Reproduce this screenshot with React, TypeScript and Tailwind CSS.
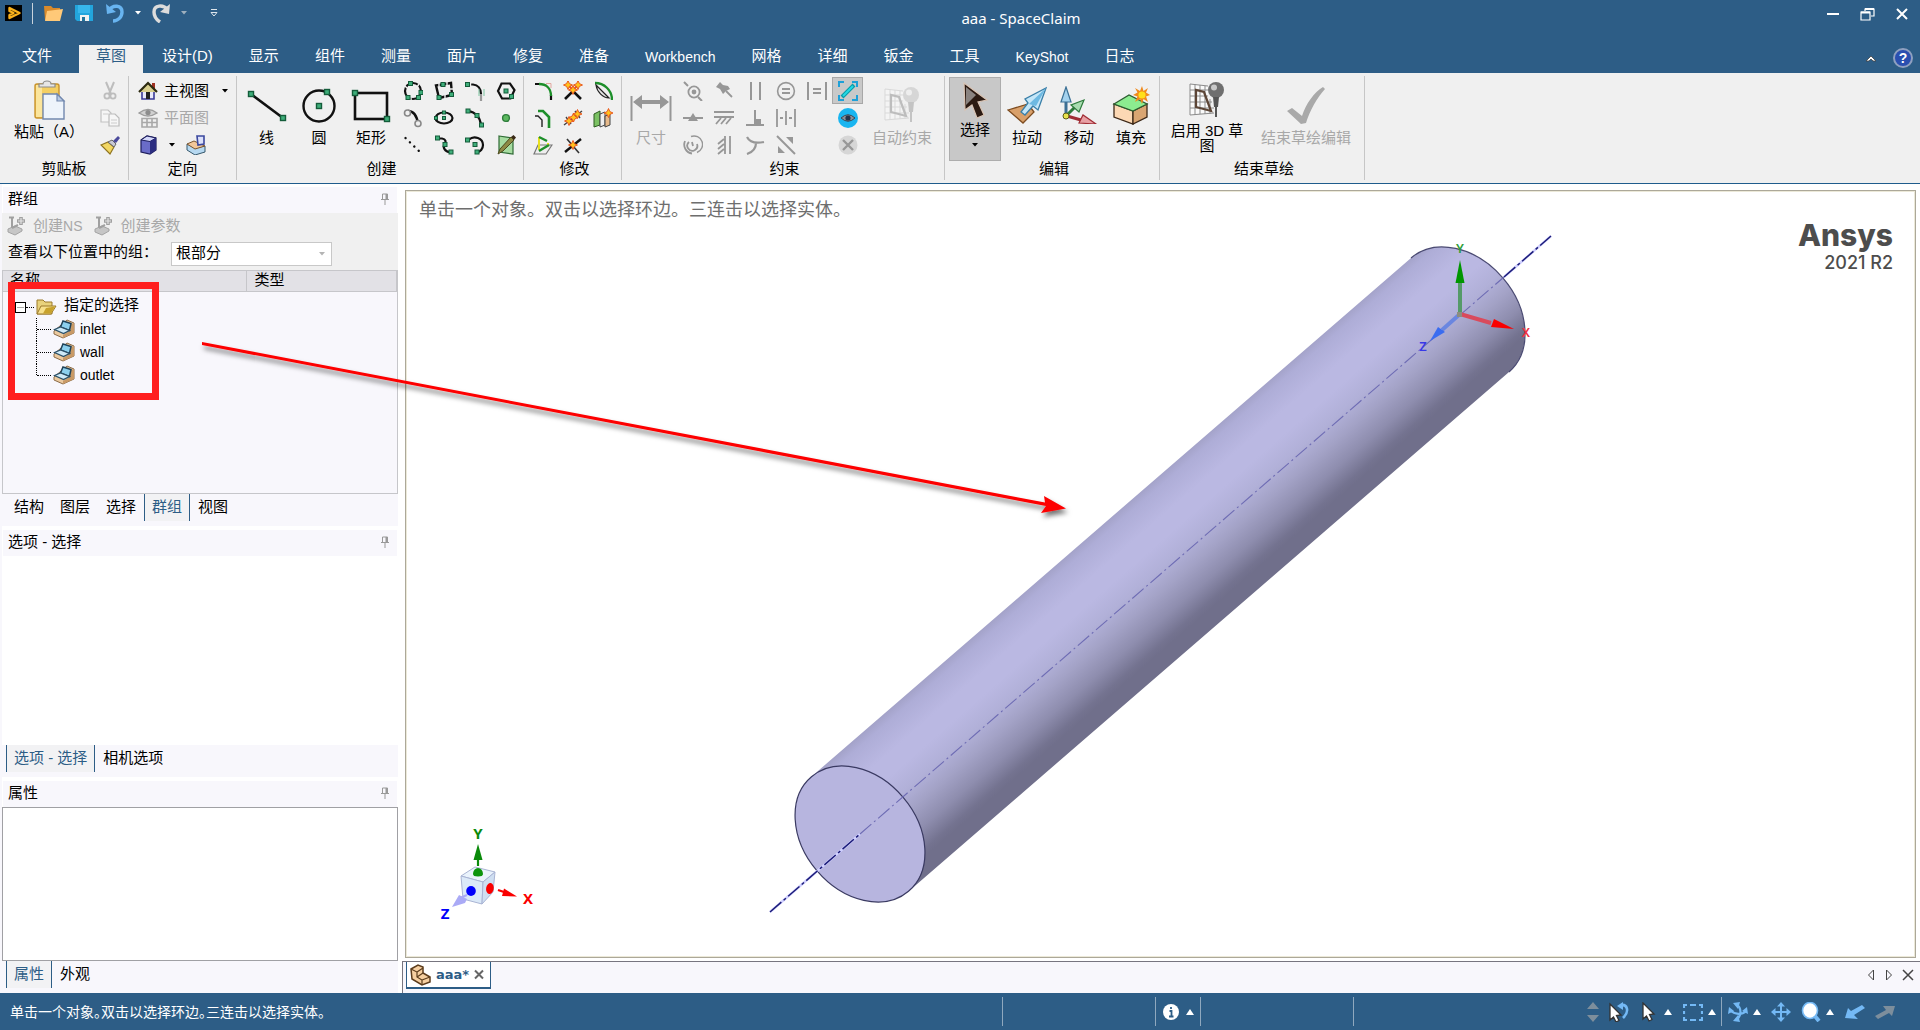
import type { ReactNode } from "react";

const GREEN = "#3fae7a";

/* ---------- drawing helpers ---------- */

function Mark({ x, y, s = 4 }: { x: number; y: number; s?: number }) {
  return (
    <rect x={x - s / 2} y={y - s / 2} width={s} height={s} fill={GREEN} stroke="#145c3a" strokeWidth={s > 4 ? 1.4 : 1} />
  );
}

function Svg({ w = 20, h = 20, children }: { w?: number; h?: number; children: ReactNode }) {
  return (
    <svg width={w} height={h} viewBox={`0 0 ${w} ${h}`} fill="none" className="shrink-0" aria-hidden="true">
      {children}
    </svg>
  );
}

function Caret({ up = false, color = "#000" }: { up?: boolean; color?: string }) {
  return (
    <Svg w={10} h={6}>
      <path d={up ? "M1 6 L5 0 L9 6 Z" : "M2 1 H8 L5 4.5 Z"} fill={color} />
    </Svg>
  );
}

/* ---------- create icons ---------- */

const createIcons: { label: string; art: ReactNode }[] = [
  {
    label: "三点圆",
    art: (
      <>
        <circle cx="10" cy="10" r="8" stroke="#111" strokeWidth="2.2" />
        <path d="M2 5 L4 7 M16 3 L14 6 M8 16 L8 20" stroke="#f0f0f0" strokeWidth="1.4" />
        <Mark x={7.5} y={2.5} />
        <Mark x={18} y={11.5} />
        <Mark x={5} y={16.5} />
        <Mark x={15.5} y={16.5} />
      </>
    ),
  },
  {
    label: "三点矩形",
    art: (
      <>
        <path d="M2 4.5 L17 2 L18 14 L5 17 Z" stroke="#111" strokeWidth="2.4" />
        <path d="M5 1 V6 M13 0 V5 M15 8 H20 M11 13 V18" stroke="#f0f0f0" strokeWidth="1.4" />
        <Mark x={9} y={3.5} />
        <Mark x={17.5} y={13.5} />
        <Mark x={5} y={16.5} />
      </>
    ),
  },
  {
    label: "切线弧",
    art: (
      <>
        <path d="M3 3.5 H8 C13 4 16 8 16 13" stroke="#111" strokeWidth="2.2" />
        <path d="M16 13 V20" stroke="#999" strokeWidth="2.2" />
        <path d="M14 8 V15 M19 8 V15" stroke="#7cc4a0" strokeWidth="1" />
        <path d="M5.5 1 V6" stroke="#f0f0f0" strokeWidth="1.4" />
        <Mark x={2.5} y={3.5} />
      </>
    ),
  },
  {
    label: "多边形",
    art: (
      <>
        <path d="M5.5 2.5 H14 L18.5 9 L14.5 17.5 H6 L2 10 Z" stroke="#111" strokeWidth="2.2" />
        <Mark x={10} y={10} />
        <Mark x={15.5} y={15.5} />
      </>
    ),
  },
  {
    label: "切线",
    art: (
      <>
        <path d="M5 3 C11 3 14 8 15 16" stroke="#111" strokeWidth="2.4" />
        <circle cx="4.5" cy="5" r="3" stroke="#888" strokeWidth="1.6" fill="#f0f0f0" />
        <circle cx="15" cy="15.5" r="3" stroke="#888" strokeWidth="1.6" fill="#f0f0f0" />
      </>
    ),
  },
  {
    label: "椭圆",
    art: (
      <>
        <ellipse cx="10" cy="10" rx="8.5" ry="5.5" stroke="#111" strokeWidth="2.2" />
        <Mark x={10} y={4.5} s={3} />
        <Mark x={10} y={10} s={3} />
        <Mark x={2} y={10} s={3} />
      </>
    ),
  },
  {
    label: "三点弧",
    art: (
      <>
        <path d="M3 3 C10 4 15 9 16 17" stroke="#111" strokeWidth="2.2" />
        <Mark x={3} y={3} />
        <Mark x={12} y={7.5} />
        <Mark x={16.5} y={17} />
      </>
    ),
  },
  { label: "点", art: <circle cx="10" cy="10" r="3.4" fill="#5cb85f" stroke="#2d7d3a" strokeWidth="1.4" /> },
  {
    label: "构造线",
    art: <path d="M2.5 3 L18 18" stroke="#111" strokeWidth="2.4" strokeLinecap="round" strokeDasharray="0.1 6" />,
  },
  {
    label: "样条曲线",
    art: (
      <>
        <path d="M4 3.5 H8 C12 4 12 7 11 9 C8 12 11 17 16 17" stroke="#111" strokeWidth="2.2" />
        <Mark x={3.5} y={3} />
        <Mark x={11} y={9.5} />
        <Mark x={17} y={17} />
      </>
    ),
  },
  {
    label: "扫掠弧",
    art: (
      <>
        <path d="M4 4.5 C9 0 18 3 18 10 C18 14 15 17 12.5 17" stroke="#111" strokeWidth="2.2" />
        <Mark x={2.5} y={5} />
        <Mark x={10} y={9.5} />
        <Mark x={12} y={17} />
      </>
    ),
  },
  {
    label: "面曲线",
    art: (
      <>
        <path d="M3 1 L17 3 V19 L3 17 Z" fill="#a6dba0" stroke="#2f6b35" strokeWidth="1.2" />
        <path d="M2 19 L4 14 L15 2 L18 5 L7 16 Z" fill="#8d8a45" stroke="#4c4a1e" strokeWidth="1" />
        <path d="M15 2 L18 5 L20 2.5 L17.5 0 Z" fill="#3a2a18" />
      </>
    ),
  },
];

/* ---------- modify icons ---------- */

function Spark({ x, y }: { x: number; y: number }) {
  return (
    <path
      transform={`translate(${x} ${y})`}
      d="M0 -4.5 L1.4 -1.4 L4.5 0 L1.4 1.4 L0 4.5 L-1.4 1.4 L-4.5 0 L-1.4 -1.4 Z"
      fill="#ffc21c"
      stroke="#e8501e"
      strokeWidth="0.9"
    />
  );
}

const modifyIcons: { label: string; art: ReactNode }[] = [
  {
    label: "圆角",
    art: (
      <>
        <path d="M2 3 H6 M18 14 V19" stroke="#111" strokeWidth="2.2" />
        <path d="M6 3 C13 3 18 7 18 15" stroke="#1d8f2a" strokeWidth="2.4" />
        <path d="M13 2.5 H18 V7" stroke="#e2a8a0" strokeWidth="1" />
      </>
    ),
  },
  {
    label: "修剪",
    art: (
      <>
        <path d="M2 18 L10 10 L18 18" stroke="#111" strokeWidth="2.6" />
        <path d="M5 4 L10 9 L15 4" stroke="#e8501e" strokeWidth="2" />
        <Spark x={5} y={4} />
        <Spark x={15} y={4} />
        <Spark x={10} y={9} />
      </>
    ),
  },
  {
    label: "偏移曲线",
    art: (
      <>
        <path d="M2 2 C11 2 19 9 19 19" stroke="#1d8f2a" strokeWidth="2.4" />
        <path d="M3 4 L16 17 C10 17 4 11 3 4 Z" stroke="#222" strokeWidth="1.2" fill="#e6e6e6" />
      </>
    ),
  },
  {
    label: "偏移",
    art: (
      <>
        <path d="M2 8 H5 L9 12 V19" stroke="#222" strokeWidth="1.4" />
        <path d="M5 3 H10 L16 9 V20" stroke="#1d8f2a" strokeWidth="2.6" />
      </>
    ),
  },
  {
    label: "分割",
    art: (
      <>
        <path d="M1 17 L19 3 M3 9 L8 16 M12 3 L17 10" stroke="#444" strokeWidth="1.4" />
        <Spark x={6} y={13} />
        <Spark x={10.5} y={9.5} />
        <Spark x={14.5} y={6} />
      </>
    ),
  },
  {
    label: "创建块",
    art: (
      <>
        <path d="M1 6 L7 3 V17 L1 19 Z" fill="#7bc163" stroke="#2c5c20" />
        <path d="M7 6 L12 4 V17 L7 19 Z" fill="#eee" stroke="#444" />
        <path d="M12 8 L17 6 V17 L12 19 Z" fill="#e6b98a" stroke="#444" />
        <Spark x={15.5} y={5} />
      </>
    ),
  },
  {
    label: "投影",
    art: (
      <>
        <path d="M5 10 H19 L13 19 H1 Z" fill="#eee" stroke="#777" strokeWidth="1.2" />
        <path d="M6 2 V15 M15 8 V10" stroke="#e8e020" strokeWidth="2" />
        <path d="M6 16 L16 10 M6 2 L14 6" stroke="#1d8f2a" strokeWidth="2.4" />
      </>
    ),
  },
  {
    label: "延伸",
    art: (
      <>
        <path d="M2 17 L18 4" stroke="#111" strokeWidth="2.4" />
        <path d="M4 4 L16 18" stroke="#333" strokeWidth="1.6" />
        <Spark x={10} y={10} />
      </>
    ),
  },
];

/* ---------- constraint icons ---------- */

const G = "#979797";
const constraintIcons: ({ label: string; art: ReactNode; on?: boolean } | null)[] = [
  {
    label: "重合",
    art: (
      <>
        <path d="M1 1 L5 5 M15 16 L19 20" stroke={G} strokeWidth="2" />
        <circle cx="11" cy="11" r="5.6" stroke={G} strokeWidth="1.8" />
        <circle cx="11" cy="11" r="2.4" fill={G} />
      </>
    ),
  },
  {
    label: "固定",
    art: (
      <>
        <path d="M6 1 L9 4 L14 5 L16 8 L12 10 L9 13 L6 8 L2 6 Z" fill={G} />
        <path d="M12 10 L18 16" stroke={G} strokeWidth="1.8" />
      </>
    ),
  },
  { label: "平行", art: <path d="M6 1 V19 M15 1 V19" stroke={G} strokeWidth="2" /> },
  {
    label: "等半径",
    art: (
      <>
        <circle cx="10" cy="10" r="8.4" stroke={G} strokeWidth="1.6" />
        <path d="M6 8 H14 M6 12 H14" stroke={G} strokeWidth="2.2" />
      </>
    ),
  },
  { label: "等长度", art: <path d="M1 1 V19 M19 1 V19 M6 8 H14 M6 12 H14" stroke={G} strokeWidth="2" /> },
  {
    label: "草图约束",
    on: true,
    art: (
      <>
        <path d="M1 6 V1 H6 M14 1 H19 V6 M19 14 V19 H14 M6 19 H1 V14" stroke="#1ea0d8" strokeWidth="2" />
        <path d="M4 16 L16 4" stroke="#089ba8" strokeWidth="4" />
        <path d="M5 15 L15 5" stroke="#25d8e4" strokeWidth="2" />
      </>
    ),
  },
  {
    label: "中点",
    art: (
      <>
        <path d="M0 10 H20" stroke={G} strokeWidth="2" />
        <path d="M5 13 L10 5 L15 13 Z" fill={G} />
      </>
    ),
  },
  {
    label: "水平",
    art: <path d="M0 4 H20 M0 9 H20 M7 10 L2 16 M12 10 L7 16 M17 10 L12 16" stroke={G} strokeWidth="1.8" />,
  },
  {
    label: "垂直",
    art: (
      <>
        <path d="M1 17 H19 M10 2 V17" stroke={G} strokeWidth="2" />
        <rect x="10" y="11" width="6" height="6" fill={G} />
      </>
    ),
  },
  { label: "对称", art: <path d="M1 1 V19 M19 1 V19 M10 3 V17 M4 10 H7 M13 10 H16" stroke={G} strokeWidth="1.8" /> },
  null,
  {
    label: "显示约束",
    art: (
      <>
        <circle cx="10" cy="10" r="10" fill="#19b5f0" />
        <path d="M3 10 Q10 3.5 17 10 Q10 16.5 3 10 Z" fill="#8a8f98" stroke="#3c4450" />
        <circle cx="10" cy="10" r="2.6" fill="#24324a" />
      </>
    ),
  },
  {
    label: "同心",
    art: (
      <>
        <path d="M8 1.5 A8.5 8.5 0 0 1 14 17.500" stroke={G} strokeWidth="1.4" />
        <path d="M2 6 A9 9 0 0 0 9 18.500 M6 7 A5 5 0 1 0 14 9 M9 7 L10 11" stroke={G} strokeWidth="1.8" />
      </>
    ),
  },
  {
    label: "竖直",
    art: <path d="M11 1 V19 M16 1 V19 M10 4 L4 9 M10 9 L4 14 M10 14 L4 19" stroke={G} strokeWidth="1.8" />,
  },
  {
    label: "相切",
    art: <path d="M2 2 C4 6 9 9 19 7 M11 8 C11 13 8 17 2 19" stroke={G} strokeWidth="2.2" />,
  },
  {
    label: "共线",
    art: (
      <>
        <path d="M1 1 L19 19" stroke={G} strokeWidth="2" />
        <path d="M10 2 H17 V9 Z M2 11 V18 H9 Z" fill={G} />
      </>
    ),
  },
  null,
  {
    label: "删除约束",
    art: (
      <>
        <circle cx="10" cy="10" r="9.5" fill="#d6d6d6" />
        <path d="M5 5 L15 15 M15 5 L5 15" stroke="#979797" strokeWidth="2.4" />
      </>
    ),
  },
];

/* ---------- ribbon parts ---------- */

function Group({ label, className, children }: { label: string; className: string; children: ReactNode }) {
  return (
    <section className={`my-[3px] flex shrink-0 flex-col border-r border-[#c6c6c6] pt-px ${className}`} aria-label={label}>
      <div className="flex h-[82px] items-start">{children}</div>
      <div className="text-center leading-[20px]">{label}</div>
    </section>
  );
}

function Big({ icon, label, className = "w-[52px]", off = false }: { icon: ReactNode; label: string; className?: string; off?: boolean }) {
  return (
    <button
      disabled={off}
      className={`flex shrink-0 flex-col items-center pt-[10px] leading-[18px] whitespace-nowrap ${off ? "text-[#a8a8a8]" : ""} ${className}`}
    >
      <span className="flex h-[36px] items-center">{icon}</span>
      <span className="mt-[6px]">{label}</span>
    </button>
  );
}

function Grid({ items, className }: { items: ({ label: string; art: ReactNode; on?: boolean } | null)[]; className: string }) {
  return (
    <div className={`grid shrink-0 auto-rows-[27px] ${className}`}>
      {items.map((it, i) =>
        it ? (
          <button
            key={i}
            title={it.label}
            aria-label={it.label}
            className={`flex items-center justify-center ${it.on ? "border border-[#a8a8a8] bg-[#c9c9c9]" : ""}`}
          >
            <Svg>{it.art}</Svg>
          </button>
        ) : (
          <span key={i} />
        ),
      )}
    </div>
  );
}

function Bulb({ dim = false }: { dim?: boolean }) {
  const line = dim ? "#c4c4c4" : "#555";
  const thin = dim ? "#d9d9d9" : "#8c8c8c";
  return (
    <Svg w={38} h={38}>
      <path d="M2 3 L20 6 V31 L2 34 Z" fill={dim ? "#f4f4f4" : "#fafafa"} />
      <path d="M2 3 V34 L26 32 M2 3 L20 5 M7 3 V34 M12 4 V33 M17 5 V33 M22 18 V33 M2 9 H20 M2 15 H20 M2 21 H24 M2 27 H26" stroke={thin} strokeWidth="1" />
      <path d="M8 9 V26 L23 30 L16 11 Z" stroke={dim ? "#bdbdbd" : "#5c4536"} strokeWidth="2.2" />
      <circle cx="28" cy="9" r="8" fill={dim ? "#d6d6d6" : "#6f6f6f"} />
      <circle cx="26" cy="6.5" r="3" fill={dim ? "#eee" : "#c8c8c8"} />
      <path d="M25 16 H31 L30 26 H26 Z" fill={line} />
      <path d="M28 26 V36" stroke={line} strokeWidth="2" />
    </Svg>
  );
}

const tabs = ["文件", "草图", "设计(D)", "显示", "组件", "测量", "面片", "修复", "准备", "Workbench", "网格", "详细", "钣金", "工具", "KeyShot", "日志"];

function TitleBar() {
  return (
    <header className="bg-[#2d5d86] text-white">
      <div className="flex h-[39px] items-start">
        <div className="flex w-[238px] shrink-0 items-center pt-[2px] pl-[4px]">
          <Svg w={18} h={22}>
            <rect x="1" y="3" width="17" height="16" fill="#000" />
            <path d="M5.5 6 V9 L9.5 11 L5.5 13 V16 L15.5 11 Z" stroke="#f9b21c" strokeWidth="2.4" strokeLinejoin="round" />
          </Svg>
          <span className="mx-[10px] h-[21px] w-px bg-[#c9d3dc]" />
          <button aria-label="打开" className="mr-[12px]">
            <Svg w={20} h={20}>
              <path d="M1 3 H8 L10 5 H17 V17 H2 Z" fill="#d98a2b" />
              <path d="M4 8 L20 6 L17 18 H2 Z" fill="#ffc978" />
            </Svg>
          </button>
          <button aria-label="保存" className="mr-[12px]">
            <Svg w={18} h={20}>
              <path d="M0 2 H18 V18 H2 L0 16 Z" fill="#22a5dd" />
              <rect x="3" y="2" width="12" height="8" fill="#37b6ec" />
              <path d="M5 12 H14 V18 H5 Z" fill="#f2f2f2" />
              <rect x="7" y="14" width="3" height="4" fill="#22749c" />
            </Svg>
          </button>
          <button aria-label="撤消" className="mr-[8px]">
            <Svg w={20} h={20}>
              <path d="M3 8 C8 1 17 2 17 9 C17 14 13 18 8 18" stroke="#68b4f0" strokeWidth="3.4" />
              <path d="M1 1 L2 11 L11 9 Z" fill="#68b4f0" />
            </Svg>
          </button>
          <Caret color="#fff" />
          <button aria-label="恢复" className="mr-[8px] ml-[8px]">
            <Svg w={20} h={20}>
              <path d="M17 7 C12 1 3 2 3 9 C3 14 6 17 9 19" stroke="#dcdcdc" strokeWidth="3.4" />
              <path d="M19 1 L18 11 L9 9 Z" fill="#dcdcdc" />
            </Svg>
          </button>
          <Caret color="#9fb0be" />
          <button aria-label="自定义快速访问工具栏" className="ml-[20px]">
            <Svg w={10} h={10}>
              <path d="M2 1.5 H8" stroke="#dde5ec" />
              <path d="M2 4.5 H8 L5 8 Z" stroke="#dde5ec" />
            </Svg>
          </button>
        </div>
        <h1 className="flex-1 pt-[8px] text-center font-['Noto_Sans'] text-[15px] leading-[20px]">aaa - SpaceClaim</h1>
        <div className="flex w-[116px] shrink-0 items-center gap-[20px] pt-[6px] pl-[22px]">
          <button aria-label="最小化">
            <Svg w={14} h={16}>
              <path d="M1 8 H13" stroke="#fff" strokeWidth="2" />
            </Svg>
          </button>
          <button aria-label="还原">
            <Svg w={15} h={16}>
              <path d="M1 6 H10 V14 H1 Z M5 5 V3 H14 V10 H11" stroke="#fff" strokeWidth="1.2" />
              <path d="M1 6.5 H10 M5 3 H14" stroke="#fff" strokeWidth="2" />
            </Svg>
          </button>
          <button aria-label="关闭">
            <Svg w={14} h={16}>
              <path d="M2 3 L12 13 M12 3 L2 13" stroke="#fff" strokeWidth="2" />
            </Svg>
          </button>
        </div>
      </div>
      <nav className="flex h-[34px] items-end" aria-label="功能区">
        {tabs.map((t) => (
          <button
            key={t}
            className={`mr-[2px] h-[28px] shrink-0 px-[17px] leading-[20px] whitespace-nowrap first:mr-[10px] first:ml-[5px] ${
              t === "草图" ? "bg-[#f0f0f0] text-[#2d5d86]" : ""
            } ${/^[A-Z]/.test(t) ? "pb-[4px] text-[14px]" : "pb-[7px] text-[15px]"}`}
          >
            {t}
          </button>
        ))}
        <div className="ml-auto flex items-center gap-[16px] pr-[7px] pb-[5px]">
          <button aria-label="折叠功能区">
            <Svg w={12} h={8}>
              <path d="M1 7 L6 2 L11 7 H8 L6 5 L4 7 Z" fill="#fff" stroke="#444" strokeWidth="0.8" />
            </Svg>
          </button>
          <button
            aria-label="帮助"
            className="flex size-[20px] items-center justify-center rounded-full border-2 border-[#8fa0c0] bg-[#2a4fb0] text-[14px] leading-[16px] font-bold"
          >
            ?
          </button>
        </div>
      </nav>
    </header>
  );
}

function Ribbon() {
  return (
    <div className="flex h-[111px] shrink-0 border-b border-[#1f5c8c] bg-[#f0f0f0]">
      <Group label="剪贴板" className="w-[129px]">
        <button className="flex w-[98px] shrink-0 flex-col items-center pt-[2px] leading-[18px] whitespace-nowrap">
          <Svg w={34} h={44}>
            <rect x="3" y="5" width="24" height="34" rx="2" fill="#f4cf62" stroke="#c8922c" strokeWidth="1.4" />
            <path d="M4 6 H10 V38 H4 Z" fill="#fbe59c" />
            <path d="M7 8 V5 H11 C11 1 19 1 19 5 H23 V8 Z" fill="#e6e6e6" stroke="#8c8c8c" strokeWidth="1.2" />
            <path d="M11 15 H25 L32 22 V40 H11 Z" fill="#eef4fb" stroke="#7288ae" strokeWidth="1.4" />
            <path d="M25 15 V22 H32 Z" fill="#b9cbe4" stroke="#7288ae" strokeWidth="1.2" />
          </Svg>
          <span>粘贴（A）</span>
        </button>
        <Grid
          className="grid-cols-[24px]"
          items={[
            {
              label: "剪切",
              art: (
                <>
                  <path d="M6 1 L11 13 M14 1 L9 13" stroke="#bdbdbd" strokeWidth="2" />
                  <circle cx="7" cy="15" r="2.6" stroke="#bdbdbd" strokeWidth="1.8" />
                  <circle cx="13" cy="15" r="2.6" stroke="#bdbdbd" strokeWidth="1.8" />
                </>
              ),
            },
            {
              label: "复制",
              art: (
                <>
                  <path d="M1 2 H8 L11 5 V14 H1 Z" fill="#f6f6f6" stroke="#c2c2c2" strokeWidth="1.2" />
                  <path d="M9 6 H15 L19 10 V18 H9 Z" fill="#f6f6f6" stroke="#bbb" strokeWidth="1.2" />
                  <path d="M11 12 H17 M11 15 H17 M3 6 H8" stroke="#ccc" />
                </>
              ),
            },
            {
              label: "格式刷",
              art: (
                <>
                  <path d="M1 10 L8 7 L14 12 L10 19 Z" fill="#f2d763" stroke="#8f7420" strokeWidth="1.2" />
                  <path d="M8 7 L12 5 L16 9 L14 12 Z" fill="#c9c9d4" stroke="#666" />
                  <path d="M13 6 L18 1 L20 3 L16 8 Z" fill="#4b4a9c" />
                </>
              ),
            },
          ]}
        />
      </Group>

      <Group label="定向" className="w-[108px]">
        <div className="grid auto-rows-[27px] pl-[9px]">
          <button className="flex items-center leading-[20px]">
            <Svg>
              <path d="M4 10 H16 V18 H4 Z" fill="#e8e8fa" stroke="#3a3a98" strokeWidth="1.6" />
              <rect x="14" y="2" width="3" height="6" fill="#a03020" />
              <path d="M1 11 L10 2 L19 11" stroke="#2c2a10" strokeWidth="2.2" fill="#d8cf8e" />
              <rect x="8" y="11" width="4" height="7" fill="#222" />
            </Svg>
            <span className="ml-[6px]">主视图</span>
            <span className="ml-[11px]">
              <Caret />
            </span>
          </button>
          <button disabled className="flex items-center leading-[20px] text-[#a8a8a8]">
            <Svg>
              <path d="M1 5 Q10 -2 19 5 Q10 11 1 5 Z" fill="#d0d0d0" stroke="#9c9c9c" strokeWidth="1.4" />
              <circle cx="10" cy="4.5" r="2.6" fill="#8c8c8c" />
              <path d="M4 10.5 H19 V19 H4 Z M4 14.5 H19 M9 10.5 V19 M14 10.5 V19" stroke="#a8a8a8" strokeWidth="1.6" />
            </Svg>
            <span className="ml-[6px]">平面图</span>
          </button>
          <div className="flex items-center">
            <button aria-label="视图方向" className="flex items-center gap-[9px]">
              <Svg>
                <path d="M3 5 L9 1 L18 3 V15 L12 19 L3 17 Z" fill="#6a6cc8" stroke="#1c1c5c" strokeWidth="1.2" />
                <path d="M3 5 L9 1 L18 3 L12 6.5 Z" fill="#d4d8fa" stroke="#1c1c5c" />
                <path d="M12 6.5 L18 3 V15 L12 19 Z" fill="#2c2d80" />
              </Svg>
              <Caret />
            </button>
            <button aria-label="旋转视图" className="ml-[9px]">
              <Svg>
                <path d="M1 9 L9 13 L19 11 V17 L9 20 L1 15 Z" fill="#b6d8f0" stroke="#36586c" />
                <path d="M1 9 L8 6 L19 11 L9 14 Z" fill="#f2c79a" stroke="#7a5530" />
                <path d="M11 1 H18 V9 L12 10 Z" fill="#dbe0fa" stroke="#3b489e" strokeWidth="1.6" />
              </Svg>
            </button>
          </div>
        </div>
      </Group>

      <Group label="创建" className="w-[287px] pl-[3px]">
        <Big
          label="线"
          className="w-[53px]"
          icon={
            <Svg w={40} h={36}>
              <path d="M4 7 L36 31" stroke="#111" strokeWidth="2.6" />
              <Mark x={4} y={7} s={5} />
              <Mark x={36} y={31} s={5} />
            </Svg>
          }
        />
        <Big
          label="圆"
          icon={
            <Svg w={40} h={36}>
              <circle cx="20" cy="19" r="15.5" stroke="#111" strokeWidth="2.4" />
              <Mark x={20} y={19} s={5} />
              <Mark x={28} y={5} s={5} />
            </Svg>
          }
        />
        <Big
          label="矩形"
          icon={
            <Svg w={40} h={36}>
              <rect x="4" y="6" width="32" height="26" stroke="#111" strokeWidth="2.6" />
              <Mark x={4} y={6} s={5} />
              <Mark x={36} y={32} s={5} />
            </Svg>
          }
        />
        <Grid className="grid-cols-[repeat(4,31px)]" items={createIcons} />
      </Group>

      <Group label="修改" className="w-[98px] pl-[4px]">
        <Grid className="grid-cols-[repeat(3,30px)]" items={modifyIcons} />
      </Group>

      <Group label="约束" className="w-[323px] pl-[3px]">
        <Big
          off
          label="尺寸"
          icon={
            <Svg w={42} h={36}>
              <path d="M1.5 9 V34 M40.5 9 V34" stroke="#979797" strokeWidth="2" />
              <path d="M3 15 L12 8 V13 H30 V8 L39 15 L30 22 V17 H12 V22 Z" fill="#979797" />
            </Svg>
          }
        />
        <Grid className="grid-cols-[repeat(6,31px)]" items={constraintIcons} />
        <Big off label="自动约束" className="w-[78px]" icon={<Bulb dim />} />
      </Group>

      <Group label="编辑" className="w-[215px] pl-[4px]">
        <button className="flex h-[84px] w-[52px] shrink-0 flex-col items-center border border-[#adadad] bg-[#c8c8c8] leading-[18px]">
          <span className="mt-[3px]">
            <Svg w={30} h={40}>
              <path d="M4 2 L27 19 L18 21 L24 34 L17 37 L12 24 L5 29 Z" fill="#2b1a12" stroke="#d9c4b4" strokeWidth="1.2" />
              <path d="M6 6 L16 14 L6 24 Z" fill="#8a8380" />
            </Svg>
          </span>
          <span>选择</span>
          <span className="mt-[3px]">
            <Caret />
          </span>
        </button>
        <Big
          label="拉动"
          icon={
            <Svg w={40} h={38}>
              <path d="M1 24 L21 18 L27 26 L16 37 Z" fill="#d9a06a" stroke="#7d4c20" strokeWidth="1.3" />
              <path d="M14 26 L21 17 L18 13 L39 2 L31 24 L26 20 L18 29 Z" fill="#c4e6f8" stroke="#3a7fa8" strokeWidth="1.3" />
              <path d="M22 18 L39 2 L29 20 Z" fill="#6db9e2" />
            </Svg>
          }
        />
        <Big
          label="移动"
          icon={
            <Svg w={40} h={38}>
              <path d="M7 30 V15" stroke="#3c6f94" strokeWidth="3" />
              <path d="M7 1 L12 16 H2 Z" fill="#a4d2ee" stroke="#3a6f94" strokeWidth="1.2" />
              <path d="M8 29 L16 21" stroke="#2c7a3a" strokeWidth="3" />
              <path d="M25 14 L20 26 L12 19 Z" fill="#a8dcb0" stroke="#2c7a3a" strokeWidth="1.2" />
              <path d="M8 30 L22 34" stroke="#a02c34" strokeWidth="3" />
              <path d="M37 38 L20 37 L24 29 Z" fill="#e8a0a4" stroke="#a02c34" strokeWidth="1.2" />
              <circle cx="7" cy="30" r="3" fill="#e8e24c" stroke="#5c5a18" />
            </Svg>
          }
        />
        <Big
          label="填充"
          icon={
            <Svg w={40} h={40}>
              <path d="M3 19 L22 26 V39 L3 32 Z" fill="#fcd8b4" stroke="#3c2818" strokeWidth="1.3" />
              <path d="M22 26 L36 19 V32 L22 39 Z" fill="#d9a572" stroke="#3c2818" strokeWidth="1.3" />
              <path d="M3 19 L18 10 L36 19 L22 26 Z" fill="#8cec90" stroke="#2c5c30" strokeWidth="1.3" />
              <path
                d="M31 1 L32.5 6 L37 3 L35 7.5 L39 10 L35 11.5 L37 17 L32.5 14 L31 19 L29 14 L24 17 L26.5 11.5 L22 10 L26.5 7.5 L24 3 L29 6 Z"
                fill="#f08a1c"
              />
              <circle cx="31" cy="10" r="3.6" fill="#ffe01c" />
            </Svg>
          }
        />
      </Group>

      <Group label="结束草绘" className="w-[205px] pl-[4px]">
        <button className="flex w-[86px] shrink-0 flex-col items-center pt-[4px] leading-[15px]">
          <Bulb />
          <span className="mt-[4px] whitespace-nowrap">
            启用 3D 草
            <br />图
          </span>
        </button>
        <Big
          off
          label="结束草绘编辑"
          className="w-[112px]"
          icon={
            <Svg w={40} h={38}>
              <path d="M1 25 L6 22 L16 30 C20 18 28 6 37 1 L39 3 C31 12 24 24 20 37 L15 38 Z" fill="#a9a9a9" />
            </Svg>
          }
        />
      </Group>
    </div>
  );
}

/* ---------- left panels ---------- */

function PanelHead({ title }: { title: string }) {
  return (
    <div className="mr-px ml-[3px] flex h-[26px] shrink-0 items-center justify-between bg-[#f8f7fc] pr-[7px] pb-[2px] pl-[5px]">
      <h2 className="leading-[20px]">{title}</h2>
      <button aria-label="自动隐藏">
        <Svg w={10} h={12}>
          <path d="M2.5 6 V1 H7.5 V6 M1 6.5 H9 M5 7 V12" stroke="#999" />
          <path d="M6.5 1 V6" stroke="#999" strokeWidth="2" />
        </Svg>
      </button>
    </div>
  );
}

function PanelTabs({ items, active }: { items: string[]; active: string }) {
  return (
    <div className="ml-[2px] flex h-[32px] shrink-0 items-start bg-[#f8f7fc] pl-[4px]">
      {items.map((t) => (
        <button
          key={t}
          className={`h-[27px] border-x px-[7px] pb-[2px] leading-[20px] ${
            t === active ? "border-[#2d5d86] bg-[#f2f2f4] text-[#2d5d86]" : "border-transparent"
          }`}
        >
          {t}
        </button>
      ))}
    </div>
  );
}

function NsIcon() {
  return (
    <Svg>
      <path d="M1 13 L8 10 L15 13 V15 L8 19 L1 16 Z" fill="#c6c6c6" stroke="#a4a4a4" />
      <path d="M5 1 V12 M2 1.5 H7 M5 12 L11 9" stroke="#a0a0a0" strokeWidth="2" />
      <path d="M14 1 V9 M10 5 H18" stroke="#a0a0a0" strokeWidth="3.6" />
      <path d="M14 2 V8 M11 5 H17" stroke="#e4e4e4" strokeWidth="1.2" />
    </Svg>
  );
}

function Tree() {
  return (
    <table className="w-full table-fixed border-collapse">
      <thead>
        <tr className="h-[20px] bg-[#e2e1e6] text-left">
          <th className="w-[243px] border-r border-b border-[#c6c6ca] pb-[2px] pl-[7px] leading-[17px] font-normal">名称</th>
          <th className="border-r border-b border-[#c6c6ca] pb-[2px] pl-[8px] leading-[17px] font-normal">类型</th>
        </tr>
      </thead>
      <tbody>
        <tr>
          <td colSpan={2} className="relative pt-px">
            <div className="flex h-[25px] items-center pl-[12px] leading-[20px]">
              <button aria-label="折叠" className="mt-[4px] flex size-[11px] items-center justify-center border border-black bg-white">
                <span className="h-px w-[7px] bg-[#aaa]" />
              </button>
              <span className="mt-[4px] w-[8px] border-t border-dotted border-black" />
              <span className="mt-[3px] ml-[2px]">
                <Svg w={22} h={18}>
                  <path d="M1 2 H7 L9 4 H16 V16 H1 Z" fill="#e8d27c" stroke="#9c7a2c" />
                  <path d="M5 8 H20 L15 16 H1 Z" fill="#f6e08c" stroke="#9c7a2c" />
                  <path d="M10 10 L19 8.5 L15 15.5 H7 Z" fill="#c8a22c" />
                </Svg>
              </span>
              <span className="ml-[6px]">指定的选择</span>
            </div>
            <ul className="ml-[33px] text-[14px]">
              {["inlet", "wall", "outlet"].map((n) => (
                <li key={n} className="group flex h-[23px] items-center leading-[20px]">
                  <span className="h-full self-start border-l border-dotted border-black group-last:h-1/2" />
                  <span className="w-[14px] border-t border-dotted border-black" />
                  <span className="ml-[2px]">
                    <Svg w={22} h={20}>
                      <path d="M1 12 L14 1 L21 4 V14 L10 19 L1 15 Z" fill="#ecca9f" stroke="#8c6c48" strokeWidth="1" />
                      <path d="M18 5 L21 4 V14 L10 19 V16 L17 12 Z" fill="#c99a66" />
                      <path d="M10 2 L18 4.5 L16.5 11.5 L7.5 8 Z" fill="#8cd0ee" stroke="#1f4258" strokeWidth="1.5" />
                      <path d="M1.5 10.5 L7.5 8 L16.5 11.5 L10.5 14.5 Z" fill="#cfeaf8" stroke="#2b5068" strokeWidth="1.3" />
                    </Svg>
                  </span>
                  <span className="ml-[5px]">{n}</span>
                </li>
              ))}
            </ul>
            <div className="pointer-events-none absolute -top-[10px] left-[5px] h-[118px] w-[151px] border-[7px] border-[#ff1e1e]" />
          </td>
        </tr>
      </tbody>
    </table>
  );
}

function LeftPanels() {
  return (
    <aside className="flex w-[398px] shrink-0 flex-col bg-[linear-gradient(to_right,#f8f7fc_2px,#fff_2px)] pt-[3px]">
      <PanelHead title="群组" />
      <div className="ml-[2px] bg-[#f0f0f0]">
        <div className="flex h-[27px] items-center gap-[12px] pb-[2px] pl-[5px] leading-[20px] text-[#a8a8a8]">
          <button disabled className="flex items-center gap-[6px]">
            <NsIcon />
            <span>
              创建<span className="text-[14px]">NS</span>
            </span>
          </button>
          <button disabled className="flex items-center gap-[6px]">
            <NsIcon />
            创建参数
          </button>
        </div>
        <div className="flex h-[30px] items-start pt-[2px] pl-[6px]">
          <label htmlFor="scope" className="w-[163px] leading-[20px]">
            查看以下位置中的组：
          </label>
          <span className="relative w-[161px]">
            <select id="scope" className="block h-[24px] w-full appearance-none border border-[#c8c8c8] bg-white pb-[2px] pl-[4px] leading-[20px]">
              <option>根部分</option>
            </select>
            <span className="pointer-events-none absolute top-[9px] right-[5px] flex">
              <Caret color="#b4b4b4" />
            </span>
          </span>
        </div>
      </div>
      <div className="ml-[2px] grow-[224] basis-0 overflow-hidden border border-[#c6c6ca] bg-[#f8f7fc]">
        <Tree />
      </div>
      <PanelTabs items={["结构", "图层", "选择", "群组", "视图"]} active="群组" />
      <div className="h-[4px] shrink-0" />
      <PanelHead title="选项 - 选择" />
      <div className="grow-[190] basis-0" />
      <PanelTabs items={["选项 - 选择", "相机选项"]} active="选项 - 选择" />
      <div className="h-[4px] shrink-0" />
      <PanelHead title="属性" />
      <div className="ml-[2px] grow-[153] basis-0 border border-[#a0a0a4] bg-white" />
      <PanelTabs items={["属性", "外观"]} active="属性" />
    </aside>
  );
}

/* ---------- model view ---------- */

function Model() {
  return (
    <svg className="absolute inset-0 h-full w-full" viewBox="407 192 1507 764" fill="none" aria-label="圆柱体模型">
      <defs>
        <linearGradient id="body" gradientUnits="userSpaceOnUse" x1="811" y1="777" x2="909" y2="890">
          <stop offset="0" stopColor="#a3a2c8" />
          <stop offset="0.06" stopColor="#aeadd7" />
          <stop offset="0.22" stopColor="#bab8e2" />
          <stop offset="0.34" stopColor="#bab8e2" />
          <stop offset="0.48" stopColor="#b1b0d8" />
          <stop offset="0.6" stopColor="#a3a2c6" />
          <stop offset="0.74" stopColor="#8e8dae" />
          <stop offset="0.86" stopColor="#747390" />
          <stop offset="0.9" stopColor="#706f8b" />
          <stop offset="1" stopColor="#706f8b" />
        </linearGradient>
      </defs>
      <path d="M811 777 L1411 258 A75 56.6 49.7 0 1 1509 372 L909 891 Z" fill="url(#body)" />
      <path d="M1411 258 A75 56.6 49.7 0 1 1509 372" stroke="#4a4a72" strokeWidth="1.2" />
      <ellipse cx="860" cy="834" rx="75" ry="56.6" transform="rotate(49.7 860 834)" fill="#b7b5df" stroke="#3a3a62" strokeWidth="1.2" />
      <path d="M770 912 L860 834 M1504 277 L1551 236" stroke="#cfcfff" strokeWidth="2.4" />
      <path d="M770 912 L860 834 M1504 277 L1551 236" stroke="#1c1c78" strokeWidth="1.5" strokeDasharray="15 3 3 3" />
      <path d="M860 834 L1504 277" stroke="#6e6cb4" strokeWidth="1.1" strokeDasharray="15 3.5 2 3.5" />

      <path d="M1460 314 L1491 323" stroke="#d94a5c" strokeWidth="4" />
      <path d="M1460 314 L1442 330" stroke="#6a86e0" strokeWidth="4" />
      <path d="M1460 314 V283" stroke="#559a68" strokeWidth="4" />
      <path d="M1460 260 L1464.5 283 H1455.5 Z" fill="#009600" />
      <path d="M1514 329 L1491 327 L1494 319 Z" fill="#fa0000" />
      <path d="M1430 341 L1438 327 L1445 332 Z" fill="#3a6cf0" />
      <rect x="1457" y="312" width="5" height="5" fill="#8c8c80" />
      <g className="font-['Noto_Sans'] text-[13px] font-semibold" textAnchor="middle">
        <text x="1460" y="253" fill="#2f9e3a">Y</text>
        <text x="1526" y="337" fill="#f03040">X</text>
        <text x="1423" y="351" fill="#3838e8">Z</text>
      </g>

      <path d="M461 876 L475 867 L495 872 L483 882 Z" fill="#eaf3fc" stroke="#a9b4d4" />
      <path d="M461 876 L483 882 L482 904 L463 899 Z" fill="#dbe9f8" stroke="#a9b4d4" />
      <path d="M483 882 L495 872 L493 892 L482 904 Z" fill="#cfdff2" stroke="#a9b4d4" />
      <path d="M473 874 A5 6 0 0 1 483 874 A5 2.5 0 0 1 473 874 Z" fill="#0c940c" />
      <ellipse cx="471" cy="891" rx="4.8" ry="5" fill="#0000fa" />
      <ellipse cx="490" cy="888.5" rx="3.8" ry="5.5" transform="rotate(10 490 888)" fill="#fa0000" />
      <path d="M478 866 V857" stroke="#0a8a0a" strokeWidth="2.2" />
      <path d="M478 844 L482.5 860 H473.5 Z" fill="#0a8a0a" />
      <path d="M498 890 L504 892" stroke="#fa0000" strokeWidth="2.2" />
      <path d="M517 896.5 L502 896 L504 888.5 Z" fill="#fa0000" />
      <path d="M452 907 L459 895 L467 899 L465 903 Z" fill="#aaaaf6" />
      <path d="M460 898 L467 895" stroke="#aaaaf6" strokeWidth="2" />
      <g className="font-['Noto_Sans'] text-[15px] font-bold" textAnchor="middle">
        <text x="478" y="839" fill="#0a8a0a">Y</text>
        <text x="528" y="904" fill="#fa0000">X</text>
        <text x="445" y="919" fill="#0000fa">Z</text>
      </g>
    </svg>
  );
}

function Viewport() {
  return (
    <main className="flex min-w-0 flex-1 flex-col bg-white">
      <div className="mt-[6px] mr-[4px] mb-[3px] ml-[7px] flex-1 border border-[#aca899]">
        <div className="relative h-full border border-[#ece9d8]">
          <Model />
          <p className="relative pt-[5px] pl-[12px] text-[18px] leading-[26px] text-[#6e6e6e]">单击一个对象。双击以选择环边。三连击以选择实体。</p>
          <div className="absolute top-[26px] right-[21px] text-right font-[Inter] text-[#4d4d4d]">
            <div className="text-[30px] leading-[34px] font-extrabold">Ansys</div>
            <div className="text-[18px] leading-[22px] font-medium">2021 R2</div>
          </div>
        </div>
      </div>
      <div className="ml-[4px] flex h-[32px] items-start justify-between border-t border-l border-[#77757f] bg-[#f8f7fc] pl-[3px]">
        <div className="flex h-[27px] items-center border-x border-b-2 border-[#2d5d86] bg-white pr-[6px] pl-[2px]">
          <Svg w={24} h={22}>
            <path d="M2 5 L9 1 L14 3 V9 L21 13 V18 L13 21 L3 15 Z" fill="#f6cfa0" stroke="#5c3c1c" strokeWidth="1.5" />
            <path d="M2 5 L8 8 V13 L13 16 V21 M8 8 L14 4 M8 13 L14 9 M13 16 L21 13" stroke="#5c3c1c" strokeWidth="1.2" />
          </Svg>
          <span className="mr-[5px] ml-[3px] font-['DejaVu_Sans'] text-[13px] leading-[20px] font-bold text-[#2d5d86]">aaa*</span>
          <button aria-label="关闭文档">
            <Svg w={10} h={12}>
              <path d="M1 1.5 L9 9.5 M9 1.5 L1 9.5" stroke="#666" strokeWidth="2" />
            </Svg>
          </button>
        </div>
        <div className="flex items-center gap-[8px] pt-[7px] pr-[6px]">
          <button aria-label="上一个">
            <Svg w={10} h={12}>
              <path d="M7.5 1 V11 L2.5 6 Z" stroke="#444" />
            </Svg>
          </button>
          <button aria-label="下一个">
            <Svg w={10} h={12}>
              <path d="M2.5 1 V11 L7.5 6 Z" stroke="#444" />
            </Svg>
          </button>
          <button aria-label="关闭">
            <Svg w={12} h={12}>
              <path d="M1 1 L11 11 M11 1 L1 11" stroke="#444" strokeWidth="1.5" />
            </Svg>
          </button>
        </div>
      </div>
    </main>
  );
}

/* ---------- status bar ---------- */

const SKY = "#74b9f5";

function Pointer() {
  return <path d="M4 1 L15 12 L10.5 12.5 L13 17.5 L10 19 L7.5 14 L4 17 Z" fill="#fff" stroke="#333" strokeWidth="1.3" />;
}

function StatusItem({ label, caret = false, className = "mr-[10px]", children }: { label: string; caret?: boolean; className?: string; children: ReactNode }) {
  return (
    <button aria-label={label} className={`flex items-center gap-[4px] ${className}`}>
      <Svg>{children}</Svg>
      {caret && <Caret up color="#fff" />}
    </button>
  );
}

function StatusBar() {
  return (
    <footer className="flex h-[37px] shrink-0 items-center bg-[#2d5d86] text-[14px] text-white">
      <p className="flex-1 pl-[10px] leading-[20px] [font-feature-settings:'halt']">单击一个对象。双击以选择环边。三连击以选择实体。</p>
      <div className="h-[29px] w-[153px] border-l border-[#8fa8be]" />
      <div className="flex h-[29px] w-[45px] items-center border-l border-[#8fa8be] pl-[6px]">
        <button aria-label="信息" className="flex items-center gap-[5px]">
          <Svg w={18} h={18}>
            <circle cx="9" cy="9" r="8" fill="#fff" />
            <path d="M9 4 V6 M7.5 8 H9.5 V13 M7 13.5 H11.5" stroke="#2d5d86" strokeWidth="1.8" />
          </Svg>
          <Caret up color="#fff" />
        </button>
      </div>
      <div className="h-[29px] w-[153px] border-l border-[#8fa8be]" />
      <div className="flex h-[29px] w-[567px] items-center justify-end border-l border-[#8fa8be] pr-[25px]">
        <button aria-label="滚动" className="mr-[8px]">
          <Svg w={16} h={24}>
            <path d="M2 9 L8 2 L14 9 Z M2 15 L8 22 L14 15 Z" fill="#7d8e9c" />
          </Svg>
        </button>
        <StatusItem label="还原选择">
          <path d="M12 3 C18 2 21 9 14 16" stroke={SKY} strokeWidth="2.6" />
          <path d="M8 4 L14 0 V8 Z" fill={SKY} />
          <g transform="translate(-3 1)">
            <Pointer />
          </g>
        </StatusItem>
        <StatusItem label="选择" caret>
          <Pointer />
        </StatusItem>
        <StatusItem label="框选" caret className="mr-[4px]">
          <path d="M1 6 V3 H4 M7 3 H13 M16 3 H19 V6 M19 9 V12 M19 15 V18 H16 M13 18 H7 M4 18 H1 V15 M1 12 V9" stroke={SKY} strokeWidth="2.2" />
        </StatusItem>
        <span className="mr-[6px] h-[29px] w-px bg-[#8fa8be]" />
        <StatusItem label="旋转" caret className="mr-[9px]">
          <path d="M2 8 C7 13 14 13 18 9 M8 2 C14 6 14 14 8 18" stroke={SKY} strokeWidth="2.2" />
          <path d="M5 1 L12 0 L10 7 Z M5 19 L12 20 L10 13 Z M20 12 L19 5 L14 9 Z M0 12 L1 5 L6 9 Z" fill={SKY} />
        </StatusItem>
        <StatusItem label="平移">
          <path d="M10 3 V17 M3 10 H17" stroke={SKY} strokeWidth="2" />
          <path d="M10 0 L14 4.5 H6 Z M10 20 L14 15.5 H6 Z M0 10 L4.5 6 V14 Z M20 10 L15.5 6 V14 Z" fill={SKY} />
        </StatusItem>
        <StatusItem label="缩放" caret>
          <path d="M13 13 L18 19" stroke={SKY} strokeWidth="4" />
          <ellipse cx="9" cy="8.5" rx="7.5" ry="8" fill="#fff" stroke={SKY} strokeWidth="1.6" />
        </StatusItem>
        <StatusItem label="上一视图">
          <path d="M0 16 L3 6 L6 9 L17 3 L20 6 L9 13 L13 17 Z" fill={SKY} />
        </StatusItem>
        <StatusItem label="下一视图" className="">
          <path d="M20 4 L17 14 L14 11 L3 17 L0 14 L11 8 L8 4 Z" fill="#7d8e9c" />
        </StatusItem>
      </div>
    </footer>
  );
}

export default function App() {
  return (
    <div className="flex h-screen flex-col overflow-hidden bg-white font-['Liberation_Sans','Noto_Sans_CJK_SC',sans-serif] text-[15px] text-black">
      <TitleBar />
      <Ribbon />
      <div className="relative flex min-h-0 flex-1">
        <LeftPanels />
        <Viewport />
        <svg className="pointer-events-none absolute top-0 left-0 h-[340px] w-[1080px]" viewBox="0 184 1080 340" aria-hidden="true">
          <defs>
            <filter id="shade" x="-5%" y="-10%" width="110%" height="130%">
              <feDropShadow dx="2" dy="4" stdDeviation="2.5" floodColor="#000" floodOpacity="0.55" />
            </filter>
          </defs>
          <path d="M202 342 L1045 502.5 L1044 496 L1066 508.5 L1041 513 L1046 506 L202 345 Z" fill="#fd0404" filter="url(#shade)" />
        </svg>
      </div>
      <StatusBar />
    </div>
  );
}
